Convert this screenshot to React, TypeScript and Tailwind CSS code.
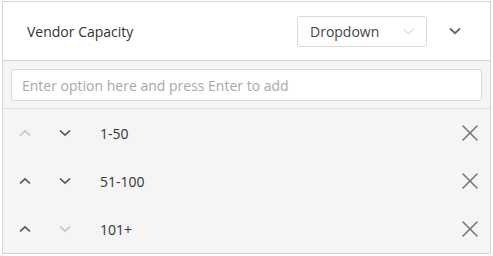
import { X } from "lucide-react";

interface Option {
  label: string;
  canUp: boolean;
  canDown: boolean;
}

const options: Option[] = [
  { label: "1-50", canUp: false, canDown: true },
  { label: "51-100", canUp: true, canDown: true },
  { label: "101+", canUp: true, canDown: false },
];

function Chevron({ dir, active }: { dir: "up" | "down"; active: boolean }) {
  return (
    <svg
      width="12"
      height="8"
      viewBox="0 0 12 8"
      className={active ? "text-[#555]" : "text-[#c4c4c4]"}
    >
      <path
        d={dir === "up" ? "M1 6.5 L6 1.8 L11 6.5" : "M1 1.5 L6 6.2 L11 1.5"}
        fill="none"
        stroke="currentColor"
        strokeWidth="1.7"
      />
    </svg>
  );
}

export default function App() {
  return (
    <div className="w-[493px] h-[256px] bg-white pt-px px-[2px] font-['Open_Sans',sans-serif] text-[#333]">
      <div className="border border-[#d4d4d4] bg-[#f5f5f5]">
        {/* Header */}
        <div className="h-[59px] bg-white border-b border-[#d4d4d4] flex items-center pl-6 pr-[29px]">
          <span className="text-[14px] flex-1">Vendor Capacity</span>
          <div className="w-[130px] h-[31px] border border-[#d9d9d9] rounded-[3px] flex items-center pl-3 pr-[12px]">
            <span className="text-[14px] text-[#444] flex-1">Dropdown</span>
            <svg width="11" height="7" viewBox="0 0 11 7" className="text-[#c8c8c8]">
              <path d="M0.5 0.8 L5.5 5.8 L10.5 0.8" fill="none" stroke="currentColor" strokeWidth="1" />
            </svg>
          </div>
          <div className="ml-[22px]">
            <svg width="12" height="8" viewBox="0 0 12 8" className="text-[#666]">
              <path d="M1 1.5 L6 6.2 L11 1.5" fill="none" stroke="currentColor" strokeWidth="1.8" />
            </svg>
          </div>
        </div>

        {/* Add option input */}
        <div className="h-[48px] border-b border-[#dcdcdc] px-2 pt-2">
          <div className="h-[32px] bg-white border border-[#d9d9d9] rounded-[3px] flex items-center px-[10px]">
            <span className="text-[14px] text-[#a8a8a8]">Enter option here and press Enter to add</span>
          </div>
        </div>

        {/* Options */}
        {options.map((o) => (
          <div key={o.label} className="h-[48px] flex items-center pl-[16px] pr-[6px]">
            <Chevron dir="up" active={o.canUp} />
            <div className="ml-[28px]">
              <Chevron dir="down" active={o.canDown} />
            </div>
            <span className="ml-[29px] text-[14px] flex-1">{o.label}</span>
            <X size={28} strokeWidth={1.3} className="text-[#777]" />
          </div>
        ))}
      </div>
    </div>
  );
}
